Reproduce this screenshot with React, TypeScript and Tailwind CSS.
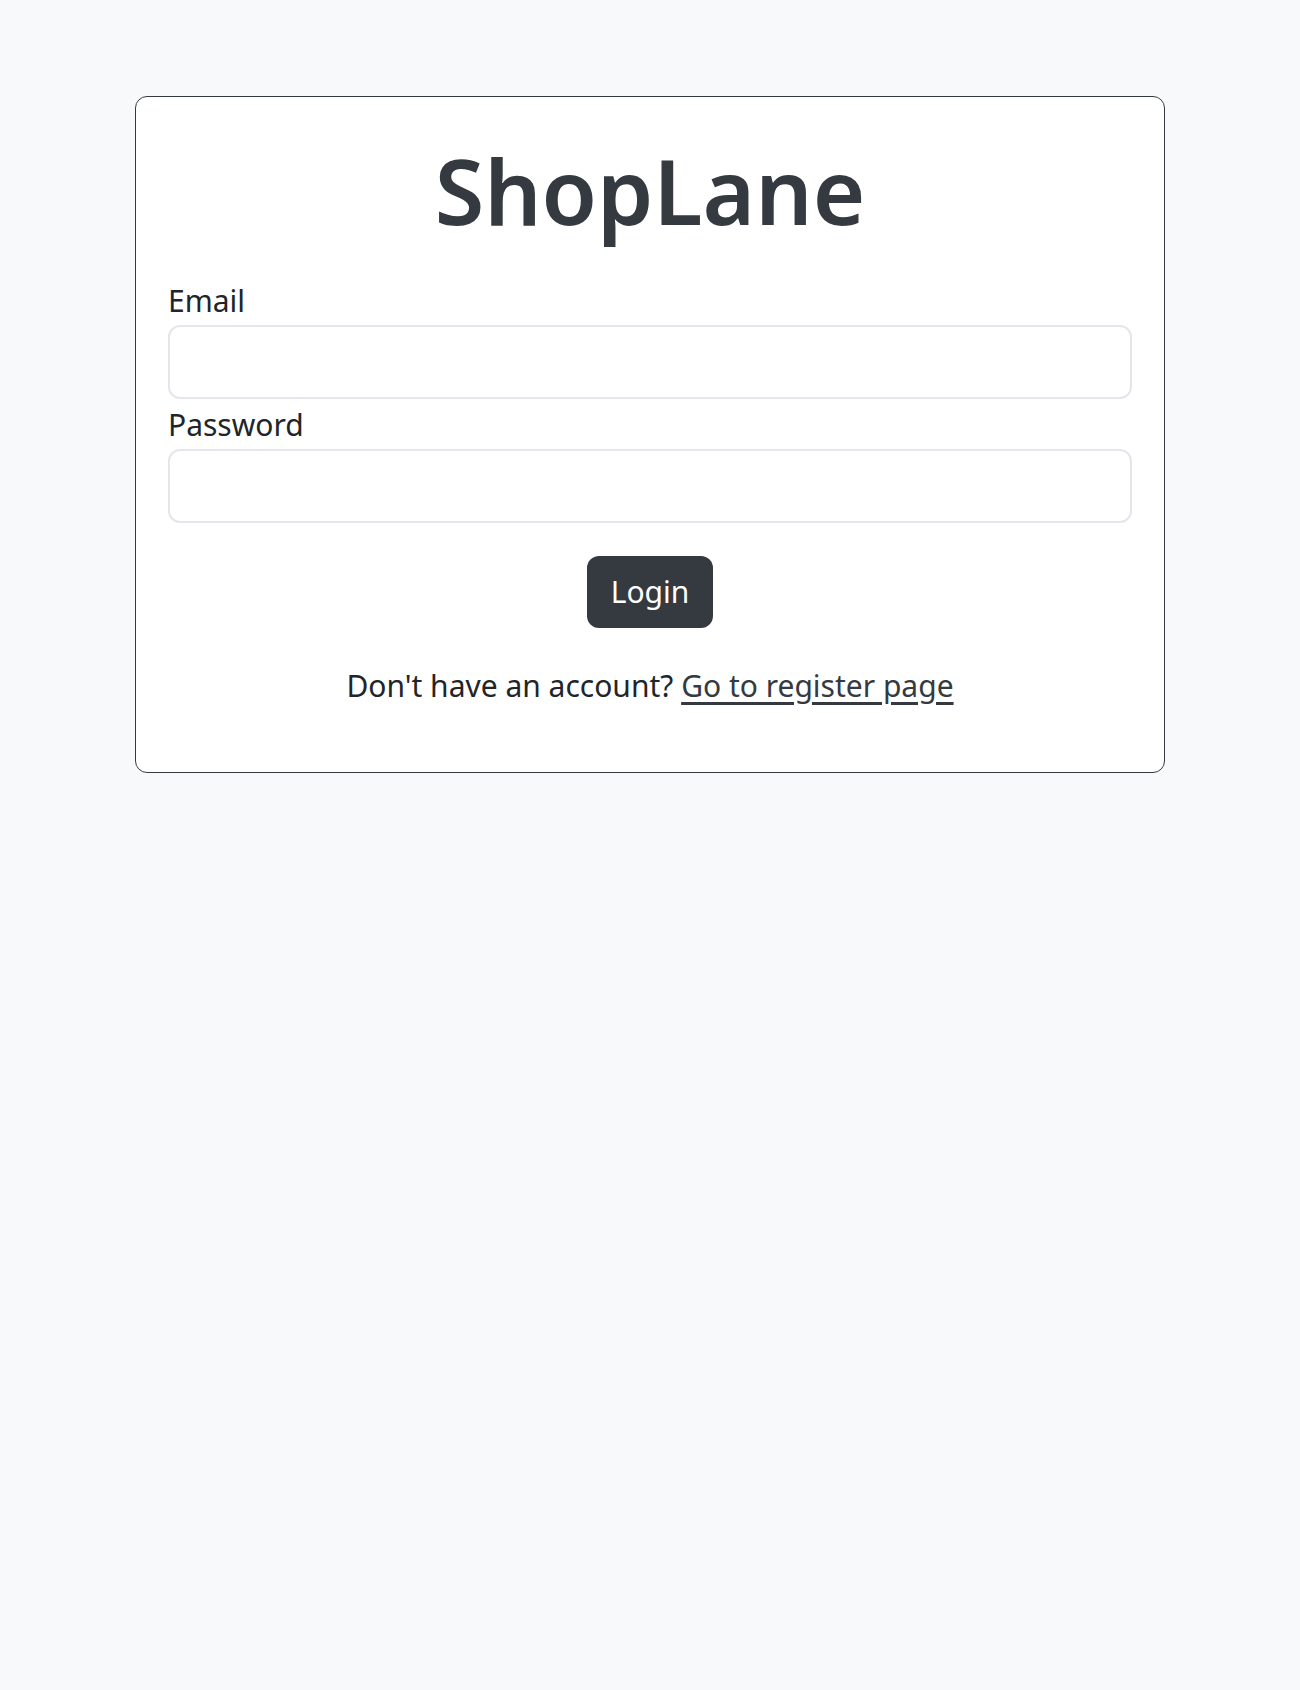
export default function App() {
  return (
    <div
      className="min-h-[1690px] bg-[#f8f9fa] pt-[96px] text-[#212529]"
      style={{ fontFamily: '"Noto Sans", "Open Sans", sans-serif' }}
    >
      <div className="mx-auto w-[1030px] rounded-[12px] border border-[#343a40] bg-white p-[32px] pb-[62px]">
        <h1 className="mb-[26px] text-center text-[90px] font-semibold leading-[122px] text-[#343a40]">
          ShopLane
        </h1>

        <form onSubmit={(e) => e.preventDefault()}>
          <label htmlFor="email" className="block text-[30px] leading-[48px]">
            Email
          </label>
          <input
            id="email"
            type="email"
            className="block h-[74px] w-full rounded-[12px] border-2 border-[#e3e6ea] bg-white px-6 text-[30px] outline-none"
          />

          <label htmlFor="password" className="mt-[2px] block text-[30px] leading-[48px]">
            Password
          </label>
          <input
            id="password"
            type="password"
            className="block h-[74px] w-full rounded-[12px] border-2 border-[#e3e6ea] bg-white px-6 text-[30px] outline-none"
          />

          <div className="mt-[33px] flex justify-center">
            <button
              type="submit"
              className="h-[72px] w-[126px] rounded-[12px] bg-[#343a40] text-[30px] leading-[48px] text-white"
            >
              Login
            </button>
          </div>
        </form>

        <p className="mt-[34px] text-center text-[30px] leading-[48px]">
          Don't have an account?{" "}
          <a href="#register" className="text-[#343a40] underline underline-offset-[5px]">
            Go to register page
          </a>
        </p>
      </div>
    </div>
  );
}
